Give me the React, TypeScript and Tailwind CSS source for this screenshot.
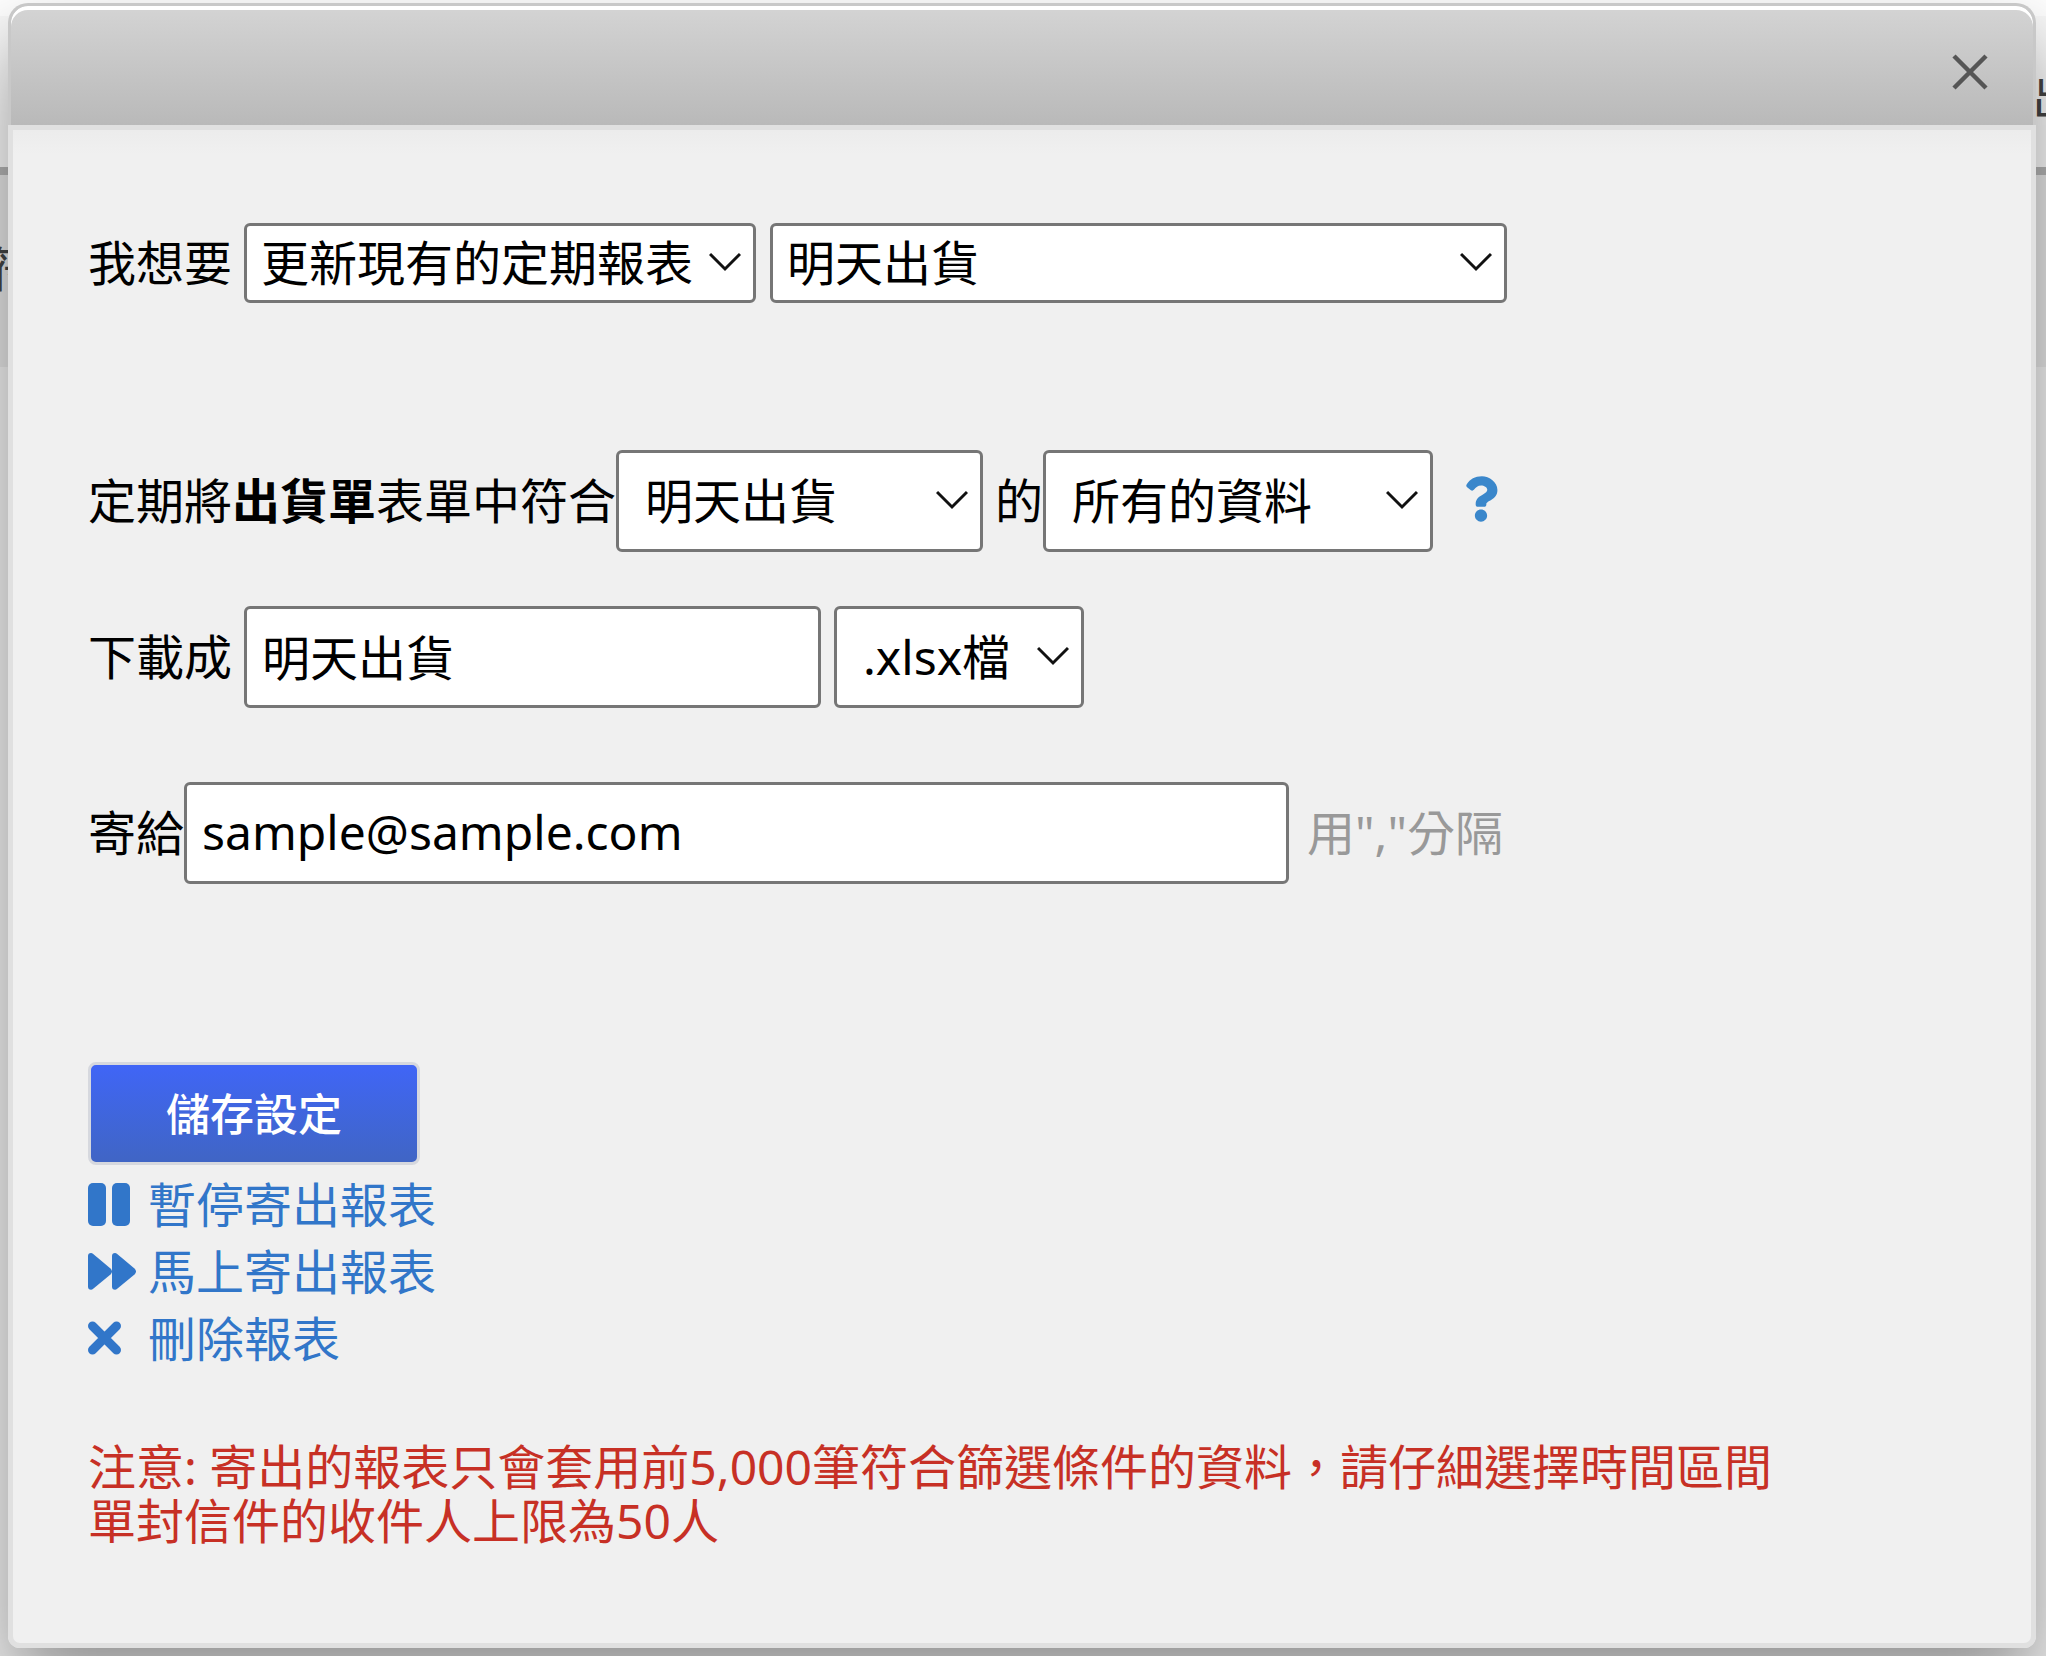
import React from "react";
import { FaQuestion } from "react-icons/fa";

const FIELD = "border-[3px] border-[#767676] rounded-md bg-white text-black leading-[54px] outline-none";

type SelectFieldProps = {
    label: string;
    options: string[];
    className: string;
    size: string;
};

const SelectField = ({ label, options, className, size }: SelectFieldProps) => {
    return (
        <span className={`relative inline-flex shrink-0 ${size}`}>
            <select aria-label={label} className={`appearance-none w-full ${FIELD} ${className}`}>
                {options.map((option) => (
                    <option key={option}>{option}</option>
                ))}
            </select>
            <svg
                viewBox="0 0 32 20"
                className="absolute right-[15px] top-1/2 -mt-[11px] h-5 w-8 pointer-events-none"
                fill="none"
                stroke="#111"
                strokeWidth="3"
            >
                <path d="M1 2 L16 17 L31 2" />
            </svg>
        </span>
    );
};

const PauseIcon = () => (
    <svg viewBox="0 0 48 48" className="h-12 w-12" fill="currentColor">
        <rect x="0" y="2" width="18" height="43" rx="5" />
        <rect x="24" y="2" width="18" height="43" rx="5" />
    </svg>
);

const ForwardIcon = () => (
    <svg viewBox="0 0 48 48" className="h-12 w-12" fill="currentColor">
        <path d="M0 8 Q0 5 3 5 Q4 5 5.500 6.200 L22.500 20.500 Q24 22 24 23.500 Q24 25 22.500 26.500 L5.500 40.500 Q4 41.700 3 41.700 Q0 41.700 0 38.500 Z" />
        <path d="M24 8 Q24 5 27 5 Q28 5 29.500 6.200 L46.500 20.500 Q48 22 48 23.500 Q48 25 46.500 26.500 L29.500 40.500 Q28 41.700 27 41.700 Q24 41.700 24 38.500 Z" />
    </svg>
);

const CrossIcon = () => (
    <svg viewBox="0 0 48 48" className="h-12 w-12" fill="none" stroke="currentColor" strokeWidth="9" strokeLinecap="round">
        <path d="M4.500 11 L28.500 35 M28.500 11 L4.500 35" />
    </svg>
);

const ACTIONS = [
    { label: "暫停寄出報表", icon: <PauseIcon /> },
    { label: "馬上寄出報表", icon: <ForwardIcon /> },
    { label: "刪除報表", icon: <CrossIcon /> },
];

const App = () => {
    return (
        <div className="relative min-h-screen overflow-hidden bg-[#eee] text-5xl leading-[54px] text-black font-['Noto_Sans','Noto_Sans_CJK_TC',sans-serif]">
            {/* Page behind the dialog */}
            <div className="absolute inset-0 flex flex-col overflow-hidden text-[#444]">
                <div className="h-4 bg-white" />
                <div className="relative h-[151px] bg-[#f9f9f9]">
                    <span className="absolute left-full top-[54px] -ml-[14px] whitespace-nowrap">出</span>
                </div>
                <div className="h-2 bg-[#b4b4b4]" />
                <div className="relative h-48 bg-[#e6e6e6]">
                    <span className="absolute top-[67px] -left-[11px] whitespace-nowrap">符</span>
                </div>
                <div className="grow bg-[#f2f2f2]" />
            </div>

            <div
                role="dialog"
                aria-label="定期報表"
                className="relative ml-2 mr-[10px] mt-[3px] mb-2 flex min-h-[1645px] flex-col rounded-t-[20px] rounded-b-xl bg-[#f0f0f0] shadow-[0_40px_80px_rgba(0,0,0,0.4)]"
            >
                <header className="flex h-[122px] items-center justify-end rounded-t-[20px] border-[3px] border-b-0 border-[#c8c8c8] bg-linear-to-b from-[#d4d4d4] to-[#b9b9b9] pr-[45px] pt-3 shadow-[inset_0_4px_0_#fff]">
                    <button type="button" aria-label="關閉" className="h-9 w-9">
                        <svg viewBox="0 0 36 36" className="h-9 w-9" fill="none" stroke="#555" strokeWidth="4.500">
                            <path d="M2 2 L34 34 M34 2 L2 34" />
                        </svg>
                    </button>
                </header>

                <form
                    className="grow rounded-b-xl border-[5px] border-[#e0e0e0] bg-linear-to-b from-[#ececec] to-[#f0f0f0] to-[24px] px-[75px] pt-[93px]"
                    onSubmit={(e) => e.preventDefault()}
                >
                    <div className="flex items-center">
                        <span className="w-[156px] shrink-0">我想要</span>
                        <SelectField label="動作" options={["更新現有的定期報表"]} size="w-[512px]" className="h-20 pl-[14px]" />
                        <SelectField label="報表" options={["明天出貨"]} size="ml-[14px] w-[737px]" className="h-20 pl-[14px]" />
                    </div>

                    <div className="mt-[147px] flex items-center">
                        <span className="shrink-0">
                            定期將<b>出貨單</b>表單中符合
                        </span>
                        <SelectField label="篩選" options={["明天出貨"]} size="w-[367px]" className="h-[102px] pl-[26px]" />
                        <span className="ml-3 shrink-0">的</span>
                        <SelectField label="資料範圍" options={["所有的資料"]} size="w-[390px]" className="h-[102px] pl-[26px]" />
                        <FaQuestion className="ml-[31px] mb-1 h-[46px] w-[34px] text-[#3a87cb]" />
                    </div>

                    <div className="mt-[54px] flex items-center">
                        <label htmlFor="filename" className="w-[156px] shrink-0">
                            下載成
                        </label>
                        <input id="filename" type="text" defaultValue="明天出貨" className={`h-[102px] w-[577px] px-[15px] pb-1 ${FIELD}`} />
                        <SelectField label="檔案格式" options={[".xlsx檔"]} size="ml-[13px] w-[250px]" className="h-[102px] pl-[26px]" />
                    </div>

                    <div className="mt-[74px] flex items-center">
                        <label htmlFor="recipients" className="shrink-0">
                            寄給
                        </label>
                        <input id="recipients" type="text" defaultValue="sample@sample.com" className={`h-[102px] w-[1105px] px-[15px] pb-1 ${FIELD}`} />
                        <span className="ml-[18px] text-[#999]">用","分隔</span>
                    </div>

                    <button
                        type="submit"
                        className="mt-[178px] block h-[103px] w-[332px] rounded-lg border-[3px] border-[#d6d8de] bg-linear-to-b from-[#4065f6] to-[#4065c5] text-[44px] font-medium text-white"
                    >
                        儲存設定
                    </button>

                    <ul className="mt-[6px] text-[#3176c9]">
                        {ACTIONS.map((action) => (
                            <li key={action.label}>
                                <a href="#" className="flex h-[67px] items-center gap-3">
                                    {action.icon}
                                    {action.label}
                                </a>
                            </li>
                        ))}
                    </ul>

                    <p className="mt-[68px] text-[#c73025]">
                        注意: 寄出的報表只會套用前5,000筆符合篩選條件的資料，請仔細選擇時間區間
                        <br />
                        單封信件的收件人上限為50人
                    </p>
                </form>
            </div>
        </div>
    );
};

export default App;
